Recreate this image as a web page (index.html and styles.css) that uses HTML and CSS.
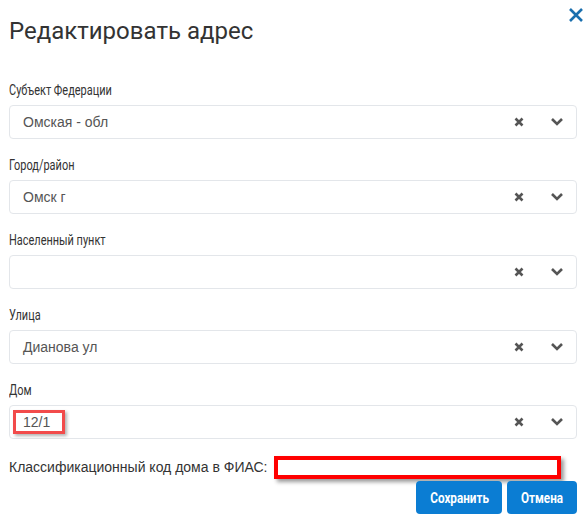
FILE: index.html
```html
<!DOCTYPE html>
<html lang="ru">
<head>
  <meta charset="UTF-8">
  <title>Редактировать адрес</title>
  <link rel="stylesheet" href="styles.css">
</head>
<body>
  <div class="modal">
    <div class="modal-header">
      <h1>Редактировать адрес</h1>
      <button class="close" type="button" aria-label="Закрыть">
        <svg width="14" height="14" viewBox="0 0 14 14"><path d="M1 1 L13 13 M13 1 L1 13" stroke="#1a6fae" stroke-width="2.6" fill="none"/></svg>
      </button>
    </div>

    <div class="field">
      <label><span>Субъект Федерации</span></label>
      <div class="select">
        <span class="value">Омская - обл</span>
        <svg class="clear" width="10" height="10" viewBox="0 0 10 10"><path d="M1.5 1.5 L8.5 8.5 M8.5 1.5 L1.5 8.5" stroke="#555" stroke-width="2.6" fill="none"/></svg>
        <svg class="arrow" width="14" height="10" viewBox="0 0 14 10"><path d="M2 2 L7 7 L12 2" stroke="#555" stroke-width="2.6" fill="none"/></svg>
      </div>
    </div>

    <div class="field">
      <label><span>Город/район</span></label>
      <div class="select">
        <span class="value">Омск г</span>
        <svg class="clear" width="10" height="10" viewBox="0 0 10 10"><path d="M1.5 1.5 L8.5 8.5 M8.5 1.5 L1.5 8.5" stroke="#555" stroke-width="2.6" fill="none"/></svg>
        <svg class="arrow" width="14" height="10" viewBox="0 0 14 10"><path d="M2 2 L7 7 L12 2" stroke="#555" stroke-width="2.6" fill="none"/></svg>
      </div>
    </div>

    <div class="field">
      <label><span>Населенный пункт</span></label>
      <div class="select">
        <span class="value"></span>
        <svg class="clear" width="10" height="10" viewBox="0 0 10 10"><path d="M1.5 1.5 L8.5 8.5 M8.5 1.5 L1.5 8.5" stroke="#555" stroke-width="2.6" fill="none"/></svg>
        <svg class="arrow" width="14" height="10" viewBox="0 0 14 10"><path d="M2 2 L7 7 L12 2" stroke="#555" stroke-width="2.6" fill="none"/></svg>
      </div>
    </div>

    <div class="field">
      <label><span>Улица</span></label>
      <div class="select">
        <span class="value">Дианова ул</span>
        <svg class="clear" width="10" height="10" viewBox="0 0 10 10"><path d="M1.5 1.5 L8.5 8.5 M8.5 1.5 L1.5 8.5" stroke="#555" stroke-width="2.6" fill="none"/></svg>
        <svg class="arrow" width="14" height="10" viewBox="0 0 14 10"><path d="M2 2 L7 7 L12 2" stroke="#555" stroke-width="2.6" fill="none"/></svg>
      </div>
    </div>

    <div class="field">
      <label><span>Дом</span></label>
      <div class="select">
        <span class="value"><span class="mark">12/1</span></span>
        <svg class="clear" width="10" height="10" viewBox="0 0 10 10"><path d="M1.5 1.5 L8.5 8.5 M8.5 1.5 L1.5 8.5" stroke="#555" stroke-width="2.6" fill="none"/></svg>
        <svg class="arrow" width="14" height="10" viewBox="0 0 14 10"><path d="M2 2 L7 7 L12 2" stroke="#555" stroke-width="2.6" fill="none"/></svg>
      </div>
    </div>

    <div class="fias">
      <span>Классификационный код дома в ФИАС:</span>
      <span class="fias-box"></span>
    </div>

    <div class="actions">
      <button class="btn btn-save" type="button"><span>Сохранить</span></button>
      <button class="btn btn-cancel" type="button"><span>Отмена</span></button>
    </div>
  </div>
</body>
</html>
```

FILE: styles.css
```css
* {
  box-sizing: border-box;
}

body {
  margin: 0;
  background: #fff;
  font-family: Roboto, 'Noto Sans', sans-serif;
  color: #333;
}

.modal {
  width: 587px;
  padding: 0 10px 0 9px;
}

.modal-header {
  display: flex;
  justify-content: space-between;
  align-items: flex-start;
  height: 80px;
}

h1 {
  margin: 15px 0 0;
  font-size: 24px;
  font-weight: 400;
  line-height: 32px;
  color: #333;
}

.close {
  margin: 8px -6px 0 0;
  padding: 0;
  border: none;
  background: none;
  line-height: 0;
  cursor: pointer;
}

.field {
  margin-bottom: 16px;
}

/* labels use a narrow face, squeezed from Roboto */
.field label {
  display: block;
  font-size: 15px;
  line-height: 20px;
  height: 25px;
}

.field label span {
  display: inline-block;
  transform: scaleX(0.73);
  transform-origin: left center;
  white-space: nowrap;
}

.select {
  display: flex;
  align-items: center;
  height: 34px;
  border: 1px solid #e3e6ea;
  border-radius: 4px;
  padding: 0 12px 0 13px;
  font-family: 'Liberation Sans', Arial, sans-serif;
  font-size: 14px;
  color: #555;
}

.select .value {
  flex: 1;
}

.select .clear {
  margin-right: 26px;
}

.mark {
  display: inline-block;
  margin-left: -10px;
  padding: 1px 12px 1px 7px;
  line-height: 16px;
  border: 3px solid #f24b4b;
  box-shadow: 2px 2px 3px rgba(0, 0, 0, 0.3);
}

.fias {
  display: flex;
  align-items: center;
  margin-top: 14px;
  height: 24px;
  font-family: 'Liberation Sans', Arial, sans-serif;
  font-size: 14px;
}

.fias-box {
  display: inline-block;
  margin-left: 6px;
  width: 287px;
  height: 23px;
  border: 4px solid #f00;
  box-shadow: 3px 3px 4px rgba(0, 0, 0, 0.4);
}

.actions {
  display: flex;
  justify-content: flex-end;
  gap: 5px;
  margin-top: 2px;
}

.btn {
  height: 33px;
  border: none;
  border-radius: 4px;
  background: #0b7dd3;
  color: #fff;
  font-family: Roboto, sans-serif;
  font-size: 15px;
  font-weight: 700;
  cursor: pointer;
}

.btn span {
  display: inline-block;
  transform: scaleX(0.78);
  white-space: nowrap;
}

.btn-save {
  width: 86px;
}

.btn-cancel {
  width: 70px;
}
```
